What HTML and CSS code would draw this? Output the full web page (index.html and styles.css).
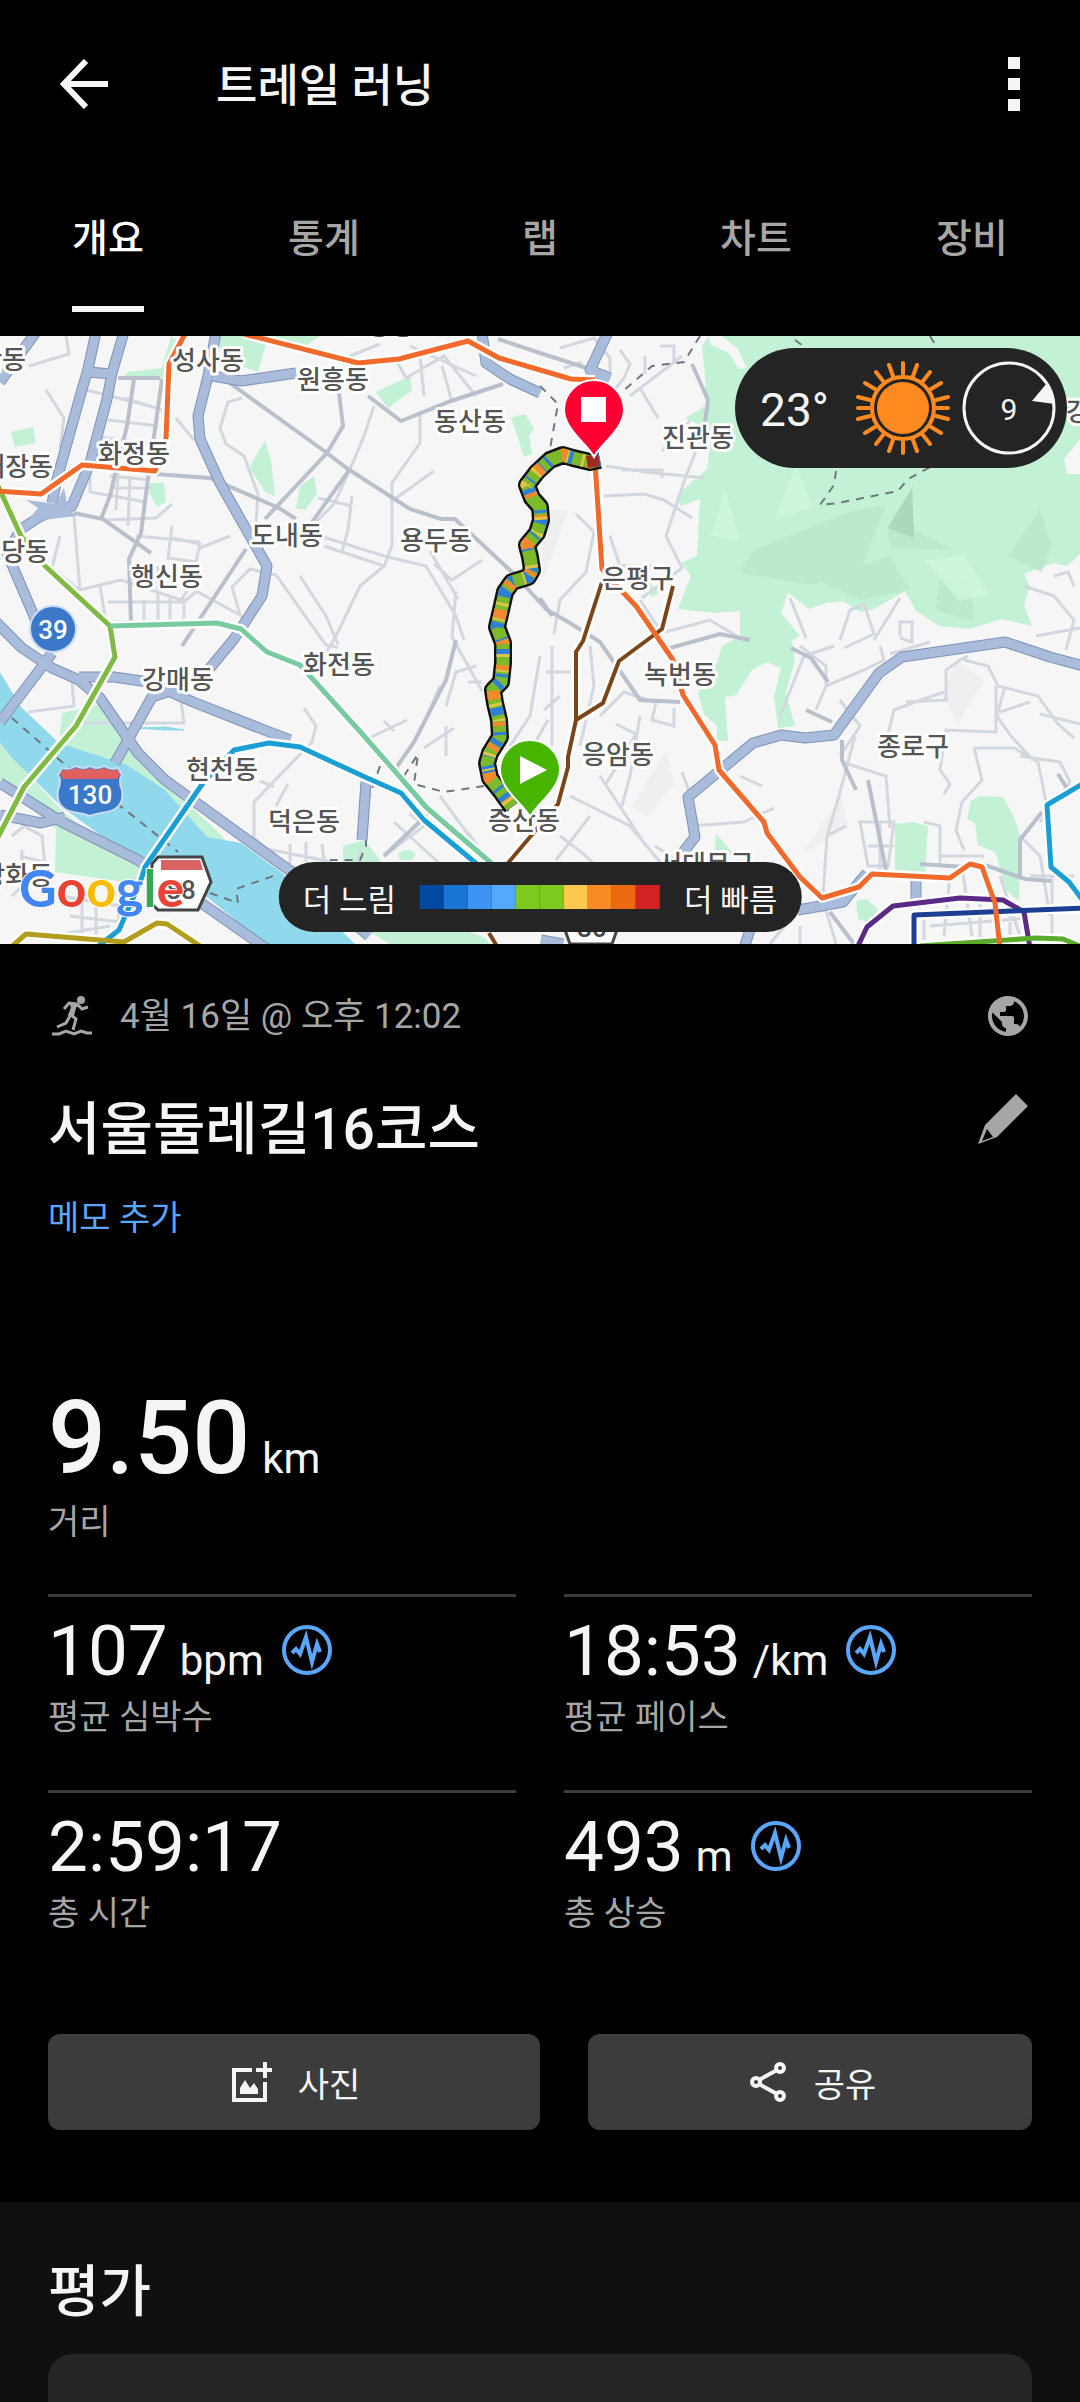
FILE: index.html
```html
<!DOCTYPE html>
<html lang="ko">
<head>
  <meta charset="UTF-8">
  <meta name="viewport" content="width=device-width, initial-scale=1.0">
  <title>트레일 러닝</title>
  <link rel="stylesheet" href="styles.css">
</head>
<body>

<header class="topbar">
  <button class="icon-btn" aria-label="뒤로">
    <svg width="48" height="50" viewBox="0 0 48 50"><path d="M26 2L4 25l22 23M4 25h44" fill="none" stroke="#f5f5f5" stroke-width="6"/></svg>
  </button>
  <h1>트레일 러닝</h1>
  <button class="icon-btn" aria-label="더보기">
    <svg width="12" height="54" viewBox="0 0 12 54" fill="#f5f5f5"><path d="M0 0h12v12H0zM0 21h12v12H0zM0 42h12v12H0z"/></svg>
  </button>
</header>

<nav class="tabs">
  <a href="#" class="active">개요</a>
  <a href="#">통계</a>
  <a href="#">랩</a>
  <a href="#">차트</a>
  <a href="#">장비</a>
</nav>

<section class="map">
  <svg class="map-canvas" viewBox="0 0 1080 608" preserveAspectRatio="xMidYMid slice">
    <rect width="1080" height="608" fill="#f6f6f7"/>

    <!-- parks -->
    <g fill="#c3f1d5">
      <path d="M709 0L702 10L705 40L706 70L685 82L712 95L707 133L676 160L681 170L700 163L697 220L681 227L691 240L678 273L716 277L740 275V300L722 310L718 325L698 357L704 378L717 390V405H728L725 361L736 359L752 334L767 326L781 332L774 361L778 392L795 390L786 357L795 324L792 304L800 300L781 277L788 257L809 273L826 267L843 265L860 276L874 273L905 255L916 275L939 290L970 293L1001 283L1032 290L1024 270L1030 250L1024 238L1053 227L1067 230L1080 218V138H1067L1064 123L1080 103V0z"/>
      <path d="M128 36l34-4 9-32 14 10-14 26-10 7-38-2zM220 0h100l-14 10-40-2-8 28-30-10-12-18z"/>
      <path d="M11 96l22-5 3 16-21 4zM150 147h14l2 19-9 5-8-14zM250 130l15-26 6 20 4 36-10-4-14-22zM296 172l4-22 14-10 3 18-12 16zM376 56l34-16 2 14-24 18zM511 82l14-4 9 15-5 6 3 19-8 3-7-22z"/>
      <path d="M895 488l18-2 15 4-3 48-30-4zM971 465l8-5 24 1 10 18 7 20-1 66-14-12-9-36-18-8-3-22-8-4zM716 498l18 20-20 6zM856 565l10-2 12 10-8 14-12-4zM744 530l34 10 22 30-30 10zM648 245l12 12-9 4zM343 510l22-6 22 30-44-4z"/>
      <path d="M59 407l3-30 38-9 40 56 26 24 50 46 30 32 38 30-2 8-44-30-80-74-30-24z"/>
      <path d="M0 407l20 22 42 46 40 32 50 30-14 12-60-38-24-20-54-42zM56 492l30 12 56 28-2 16-30-4-55-8zM370 596h100l30 12H390z"/>
      <path d="M398 518q8-8 18 0l-4 6h-12z"/>
    </g>
    <g fill="#b7e6ca" opacity=".7">
      <path d="M752 215l100-40 34-6-24 62-50 18-72-12zM887 192l26-42v44l40 20-62-2zM1008 220l32-46 12 36-10 26zM940 240l30 6 4 40-38-12zM820 245l70-25 20 34-50 10z"/>
    </g>
    <path d="M711 200l14-46 15 50zM776 182l20-54 16 44zM925 225l40-6 24 40-30 6z" fill="#d0f7df" opacity=".8"/>
    <path d="M888 192l24-40 2 50z" fill="#a9d8bd"/>
    <path d="M709 0h12l16 12 10 20-8 1-10-16-18-8z" fill="#f6f6f7"/>
    <path d="M540 174h28l-24 68zM632 470l34-56 8 34-26 32zM802 518l40-60 6 34zM942 360l14-36 28 20-26 44z" fill="#efeff0"/>

    <!-- river -->
    <path d="M0 336l21 35 38 36 68 22 38 25 42 47 34 6 41 30 73 71h-90l-58-47-59-37-41-20-45-33-48-47-14-17z" fill="#90d9ec"/>
    <path d="M138 392l28-1 18 3-20 0z" fill="#90d9ec" stroke="#90d9ec"/>

    <!-- small roads -->
    <g fill="none" stroke="#d2d7e0" stroke-width="3">
      <path d="M66 0l3 18-40 12M46 54l18 28-4 30M83 53l70 18M124 62l38 12M108 84l50 6M92 100l70 10M90 118v38l56 10M110 140l40 4M112 152h40M118 134l-2 40M130 140l-2 50M74 180l6 75M60 200l-8 32 27 22 42-10 60 20 20-30M104 184l52-2 16-14M136 200l64 6M100 250l6 36h100M108 266h76l14-12M144 264v24M158 230v56M170 262v24M184 262v26M172 190l-4 32 28 4 4-18-28-6M200 212l30-12M196 255l44 24-8-28 18-18 26 6 50 70 12 2M176 82l18 22M242 62l-14 4-8 26 6 16 18 12 14 38-2 30"/>
      <path d="M374 70l-10 30-16 38-14 30-26 26M420 75v32l-28 40v62l-8 22M392 165l42-30M352 160l-4 34-6 22M318 162l34 8M320 200l64 20 42 10 30 50 8 24M384 230l-24 20-24 50-12 20M324 210l60 20M456 255l-4 46 30 54M434 228l18 16 30-20M430 215l28 48M350 20l30-12M396 24l10 18 38-22 32 40M410 10l66 30M424 60l-4-40M452 66l-10-36M300 240l26 40 12 28M476 330l-20 6-10 34M468 346h14M440 350l-22 50M365 404l42-20M384 385l10 10M424 412l30-20M446 390v30"/>
      <path d="M28 376l46-6-2-24M80 387h104l-5-36M304 372l12 18-4 16-58 60v48l30 16 50 6 24-8 2-14M276 470l12-22M260 445l14 6M262 512l70 14M290 508v20M306 506v20M322 508l2 16M252 500l20 18 8 16M12 500l12-10 18 10 4 40M12 560l10-10v-36M20 520l24 6M60 560l60 10-4 38M70 580l50 6M50 600l60-10M82 560v48M96 562v46M384 520l40-30M394 486l44 40M410 478l44 34M420 470l36 24M468 496l22 34M440 460l44 60"/>
      <path d="M560 12l34-10 16 20v14M564 32l18-6M630 60l52-40M620 14l10 14-6 14-24 30M640 52l18 30M645 20v18M660 10h14v18M606 130l40 6 58 6M622 134h40v8M604 160l40-2 20 6 28 18M706 90l-20 50-20 60 16 32-40 30M690 85l-28 30M576 178l18 18-8 40-26 28-6 34M552 310v100M546 336h28M560 360l-16 14M610 200l10 30M640 264l20 30M650 300l60-16 30 18M540 320l-10 60-20 30M548 384l-16 28M590 310l4 40-14 60M600 380l24-24 30 10M656 366l-4 18 22 6v-18M616 388l20 10-30 50M640 380l-10 60-8 30M570 460l60 30 50 60M600 440l46 70M560 500l26 20 20 20M590 480l-34 44M682 436l8 22M740 440l22 10M690 490l54-4 30-14M655 510l30 20"/>
      <path d="M800 20v30M790 262l16 40M840 304l10-30 14-6 10 30-30 14M900 300v-14h12v20l-12-4M900 262l-26 42M1024 250l30 10 20 24-8 30M1036 300l44-8M1054 240l14-4 6 14M780 380l24-60 30-10M800 310l26 20v20l-10 24M880 310l4 14-20 10-38 16M890 318l40-12M964 324l24 6 10 20 40 10 20 28 16 14M944 356l-34 12-16 6-6 24M1005 350l-8 30 14 20 22 24M1000 376l30-10M906 366l40-2v-30l14-10 8-4M996 350v46l-50-2-6 40 10 14-6 10M974 412h40l24 14 8 40M974 412l8 32-20 22-6 28 8 20M1020 420l40 6 10 20M1080 388l-40-10M840 420l20-30-20-26M855 400l-16 60-12 40-4 60M842 426l44 14 4 52M860 486h34l-6 44h-20zM868 510h26M826 500l20-10M858 540l-20 30M880 486v50M924 486l16 4v40M940 520h44M950 540l-6 60M962 530l10 70M980 560v48M1000 540l20 60M1030 540h44M1040 486l30-40M1052 540v68M1010 568v40M930 590l100-8M924 604v-30M780 580l46-6 10 34M800 590v18M770 608l24-30M1020 500l20 20 10 60"/>
    </g>

    <!-- main grey roads -->
    <g fill="none" stroke="#b9c0cc" stroke-width="4">
      <path d="M220 40l107 77 21 16 62 40 31 10h14l58 54 34 37 23 13 30 19 40 58 40 2M339 57l4 33-16 27-62 66M155 138l55 4 69 30 17 11M368 60l33 25 50-20 52-17M134 43l-7 47-11 44-6 26-9 23M162 43l-14 100-7 54-12 26 2 64M118 42h42M74 177l29 6 48 34M246 213l-64 97M350 133l-40 56M498 3l42 14 50 16M456 304l-10 40-32 62-18 26M692 28l16 36-4 30M540 262l12 18M670 312l50-14 30 6M791 312l20 10 17 24M806 374l26 12M842 404v20l14 30M868 444l18 90M985 529l40 14 26 2M1020 540v-36l22-28M1058 438l10 16M830 576l24 32M404 450l16 10M384 520l46-44M920 528l60 4"/>
    </g>
    <g fill="none" stroke="#6f7882" stroke-width="2" stroke-dasharray="8 7">
      <path d="M700 0l-16 26-32 4-30 26M540 50l18 18-10 56M836 135l-2 14-14 20 18-2 60-12 10-12 30-16M795 4l8 6M930 0l6 10M12 382l50 44 66 50 50 40M210 557l28 10-2-14 40-14M404 440l14-22-4 30 30 8 40-6M380 430l-14 40v40l-6 14h-30"/>
    </g>

    <!-- expressways -->
    <g fill="none" stroke="#7f92b8" stroke-width="11" stroke-linejoin="round">
      <path id="hw1" d="M36-4L0 46M96-4l-8 37-7 24-24 86-5 24M88 36l24 2M124-4l-12 41-5 26-17 64-18 43-31 10-20 13-14 24 24 56 14 34M216-4l-8 44-10 40 2 23 20 44 47 83-5 30-28 43-24 29M213 40l28 5 55-8M482-4l4 31 24 16 30 14"/>
      <path id="hw2" d="M-4 286l26 26 30 20 27 12 21 18 38 55 27 27 55 40 69 50 80 66M79 341h35l34 5 45 20 79 31 18 7M176 353l-24 8-37 66M0 386l38-50 14-19M0 447l62 39 76 38 69 47 60 42M0 479l41 8 24-6M366 446l-4 58"/>
      <path id="hw3" d="M1084 330l-34-9-45-15-103 15-23 16-45 62-29 3-24-3-28 8-65 54 7 40-14 18M798 574l45-8 24-29M916 540v28M750 594l-6 18M563 608l-22-4M608-4l-18 38 20 8"/>
    </g>
    <g fill="none" stroke="#a9bcdb" stroke-width="9" stroke-linejoin="round">
      <path d="M36-4L0 46M96-4l-8 37-7 24-24 86-5 24M88 36l24 2M124-4l-12 41-5 26-17 64-18 43-31 10-20 13-14 24 24 56 14 34M216-4l-8 44-10 40 2 23 20 44 47 83-5 30-28 43-24 29M213 40l28 5 55-8M482-4l4 31 24 16 30 14"/>
      <path d="M-4 286l26 26 30 20 27 12 21 18 38 55 27 27 55 40 69 50 80 66M79 341h35l34 5 45 20 79 31 18 7M176 353l-24 8-37 66M0 386l38-50 14-19M0 447l62 39 76 38 69 47 60 42M0 479l41 8 24-6M366 446l-4 58"/>
      <path d="M1084 330l-34-9-45-15-103 15-23 16-45 62-29 3-24-3-28 8-65 54 7 40-14 18M798 574l45-8 24-29M916 540v28M750 594l-6 18M563 608l-22-4M608-4l-18 38 20 8"/>
    </g>
    <path d="M26 164l30 4 8-16 4 20 8 8-34 4-20 8 16-20z" fill="#a9bcdb"/>

    <!-- subway lines -->
    <g class="casing">
      <path d="M186-4l-17 32-3 74-11 33-73-6-41 29-45-3M244-2l114 29 41-4 69-18 31 17 72 21 24 1M595 126l7 107 12 14 22 23 37 54 10 35 32 50 4 25 45 52 3 11 33 44 22 21 37-11 13-13 78 4 20-14 12 3 13 36 5 45"/>
      <path d="M-2 150l23 50 24 30 65 60 5 31-39 69-52 61-26 50M110 290l107-3 24 6 26 23 33 13 65 72 62 71 70 60M96 612l23-18 22-50 4-13 58-84 31-33 35-7 31 4 65 30 36 16 23 27 60 50M10 612l16-14 98 8 33-19 10 1 36 24M602 246l-19 59-7 11v68l-8 37v10l-10 37-28 33-22 26M489 597l9 15M673 250l-11 43-43 32-16 42-27 17"/>
      <path d="M1084 447l-37 22 4 62 18 15 15 20M857 612l10-21 26-21 67-8 43 2 21 12 6 36M914 612v-33l170-7M920 610l116-8 27 1 19 8"/>
    </g>
    <g fill="none" stroke-width="5" stroke-linejoin="round">
      <path stroke="#7fbb42" d="M-2 150l23 50 24 30 65 60 5 31-39 69-52 61-26 50"/>
      <path stroke="#78ca9f" d="M110 290l107-3 24 6 26 23 33 13 65 72 62 71 70 60"/>
      <path stroke="#1a9fd4" d="M96 612l23-18 22-50 4-13 58-84 31-33 35-7 31 4 65 30 36 16 23 27 60 50M1084 447l-37 22 4 62 18 15 15 20"/>
      <path stroke="#b39d1c" d="M10 612l16-14 98 8 33-19 10 1 36 24"/>
      <path stroke="#7b4519" stroke-width="4" d="M602 246l-19 59-7 11v68l-8 37v10l-10 37-28 33-22 26M489 597l9 15M673 250l-11 43-43 32-16 42-27 17"/>
      <path stroke="#d8c8b8" d="M622 231h44l6 14"/>
      <path stroke="#f26a2b" d="M186-4l-17 32-3 74-11 33-73-6-41 29-45-3M244-2l114 29 41-4 69-18 31 17 72 21 24 1"/>
      <path stroke="#5a2a86" d="M857 612l10-21 26-21 67-8 43 2 21 12 6 36"/>
      <path stroke="#1c3f94" d="M914 612v-33l170-7"/>
      <path stroke="#5aaa2c" d="M920 610l116-8 27 1 19 8"/>
      <path stroke="#f26a2b" d="M595 126l7 107 12 14 22 23 37 54 10 35 32 50 4 25 45 52 3 11 33 44 22 21 37-11 13-13 78 4 20-14 12 3 13 36 5 45"/>
    </g>

    <!-- place names -->
    <g class="place">
      <text x="26" y="33" text-anchor="end" class="edge">일산동</text>
      <text x="208" y="34">성사동</text>
      <text x="333" y="53">원흥동</text>
      <text x="379" y="-1">고양동</text>
      <text x="470" y="95">동산동</text>
      <text x="134" y="127">화정동</text>
      <text x="53" y="140" class="edge">대장동</text>
      <text x="287" y="209">도내동</text>
      <text x="436" y="214">용두동</text>
      <text x="49" y="225" class="edge">토당동</text>
      <text x="167" y="250">행신동</text>
      <text x="698" y="111">진관동</text>
      <text x="638" y="252">은평구</text>
      <text x="1102" y="85">강북구</text>
      <text x="680" y="348">녹번동</text>
      <text x="618" y="428">응암동</text>
      <text x="913" y="420">종로구</text>
      <text x="706" y="538">서대문구</text>
      <text x="339" y="338">화전동</text>
      <text x="178" y="353">강매동</text>
      <text x="222" y="443">현천동</text>
      <text x="304" y="495">덕은동</text>
      <text x="524" y="494">증산동</text>
      <text x="53" y="549" class="edge">방화동</text>
    </g>

    <!-- road shields -->
    <circle cx="53" cy="293" r="23" fill="#3b78c9" stroke="#c8dcf5" stroke-width="2"/>
    <text class="shield" x="53" y="303" fill="#fff">39</text>
    <path d="M62 432q8 2 14-2 8 4 14 0 6 4 14 0 6 4 14 2l4 7q-4 5 0 15 3 18-15 22-12 2-17 4-5-2-17-4-18-4-15-22 4-10 0-15z" fill="#3b78c9" stroke="#c8dcf5" stroke-width="2"/>
    <path d="M62 434q8 1 14-2 8 3 14 0 6 3 14 0 6 3 14 2l2 4-3 5H63l-3-5z" fill="#e0605f"/>
    <text class="shield" x="90" y="468" fill="#fff">130</text>
    <path d="M158 521h44l9 25-13 28h-40l-6-6v-40z" fill="#fff" stroke="#444" stroke-width="3"/>
    <path d="M161 524h39l3 10h-42z" fill="#d96464"/>
    <text class="shield" x="181" y="563" fill="#555">88</text>
    <path d="M560 580l10 28h42l10-28z" fill="#fff" stroke="#444" stroke-width="3"/>
    <text class="shield" x="592" y="601" fill="#444">30</text>

    <!-- recorded track -->
    <g class="track">
      <path id="track" class="track-edge" d="M600 124l-10 2-17-4-10-3-13 5-13 12-10 13 5 13 8 9 1 13-4 13-10 12 3 12 2 13-4 7-16 5-7 10-4 18-4 17 6 16v20l-2 19-8 8 2 13 4 17 1 17-10 16-3 10 3 15 12 15 10 14"/>
      <path class="track-green" d="M600 124l-10 2-17-4-10-3-13 5-13 12-10 13 5 13 8 9 1 13-4 13-10 12 3 12 2 13-4 7-16 5-7 10-4 18-4 17 6 16v20l-2 19-8 8 2 13 4 17 1 17-10 16-3 10 3 15 12 15 10 14"/>
      <path class="track-blue" d="M600 124l-10 2-17-4-10-3-13 5-13 12-10 13 5 13 8 9 1 13-4 13-10 12 3 12 2 13-4 7-16 5-7 10-4 18-4 17 6 16v20l-2 19-8 8 2 13 4 17 1 17-10 16-3 10 3 15 12 15 10 14"/>
      <path class="track-orange" d="M600 124l-10 2-17-4-10-3-13 5-13 12-10 13 5 13 8 9 1 13-4 13-10 12 3 12 2 13-4 7-16 5-7 10-4 18-4 17 6 16v20l-2 19-8 8 2 13 4 17 1 17-10 16-3 10 3 15 12 15 10 14"/>
      <path class="track-yellow" d="M600 124l-10 2-17-4-10-3-13 5-13 12-10 13 5 13 8 9 1 13-4 13-10 12 3 12 2 13-4 7-16 5-7 10-4 18-4 17 6 16v20l-2 19-8 8 2 13 4 17 1 17-10 16-3 10 3 15 12 15 10 14"/>
      <path d="M599 124l-12 2" stroke="#9c2a22" stroke-width="12"/>
    </g>

    <!-- finish and start pins -->
    <path d="M594 121c-6-12-30-28-30-47a30 30 0 0 1 60 0c0 19-24 35-30 47z" fill="#fe0032" stroke="#fff" stroke-width="2"/>
    <path d="M581 61h25v25h-25z" fill="#fff"/>
    <path d="M530 481c-6-12-30-28-30-47a30 30 0 0 1 60 0c0 19-24 35-30 47z" fill="#47b400" stroke="#fff" stroke-width="2"/>
    <path d="M520 420v28l27-14z" fill="#fff"/>

    <text class="google" x="19" y="571"><tspan fill="#4285f4">G</tspan><tspan fill="#ea4335">o</tspan><tspan fill="#fbbc05">o</tspan><tspan fill="#4285f4">g</tspan><tspan fill="#34a853">l</tspan><tspan fill="#ea4335">e</tspan></text>
  </svg>

  <div class="weather">
    <span class="temp">23°</span>
    <svg width="94" height="94" viewBox="-47 -47 94 94">
      <g stroke="#ff8a1f" stroke-width="4" stroke-linecap="round">
        <path d="M0-34v-11M0 34v11M34 0h11M-34 0h-11M10-32l4-11M-10-32l-4-11M10 32l4 11M-10 32l-4 11M20-27l7-9M-20-27l-7-9M20 27l7 9M-20 27l-7 9M28-19l10-6M-28-19l-10-6M28 19l10 6M-28 19l-10 6M33-8l12-3M-33-8l-12-3M33 8l12 3M-33 8l-12 3"/>
      </g>
      <circle r="31" fill="#242424" stroke="#ff8a1f" stroke-width="4"/>
      <circle r="26" fill="#ff8a1f"/>
    </svg>
    <svg width="94" height="94" viewBox="-47 -47 94 94">
      <circle r="45" fill="none" stroke="#f5f5f5" stroke-width="3"/>
      <path d="M23-7l15-18 8 21z" fill="#f5f5f5"/>
      <text class="wind" y="12">9</text>
    </svg>
  </div>

  <div class="legend">
    <span>더 느림</span>
    <div class="scale">
      <i class="s1"></i><i class="s2"></i><i class="s3"></i><i class="s4"></i><i class="s5"></i><i class="s5"></i><i class="s6"></i><i class="s7"></i><i class="s8"></i><i class="s9"></i>
    </div>
    <span>더 빠름</span>
  </div>
</section>

<main class="summary">
  <div class="meta">
    <svg width="40" height="40" viewBox="0 0 40 40">
      <circle cx="29" cy="4" r="4" fill="#a6a6a6"/>
      <path d="M12 13l5-6 8 1 5 5 6-2M24 9l-6 9 6 5-3 11M18 20l-4 7-9 4" fill="none" stroke="#a6a6a6" stroke-width="3"/>
      <path d="M17 7l8 1-3 12h-6l3-9z" fill="#a6a6a6"/>
      <path d="M0 38l7 0 7-3 8 3 7-3 6 2h5" fill="none" stroke="#a6a6a6" stroke-width="3"/>
    </svg>
    <span class="date">4월 16일 @ 오후 12:02</span>
    <svg width="40" height="40" viewBox="2 2 20 20" fill="#a6a6a6"><path d="M12 2C6.480 2 2 6.480 2 12s4.480 10 10 10 10-4.480 10-10S17.520 2 12 2zm-1 17.930c-3.950-.490-7-3.850-7-7.930 0-.620.080-1.210.210-1.790L9 15v1c0 1.100.900 2 2 2v1.930zm6.900-2.540c-.260-.810-1-1.390-1.900-1.390h-1v-3c0-.550-.450-1-1-1H8v-2h2c.550 0 1-.450 1-1V7h2c1.100 0 2-.900 2-2v-.410c2.930 1.190 5 4.060 5 7.410 0 2.080-.800 3.970-2.100 5.390z"/></svg>
  </div>

  <div class="title-row">
    <h2>서울둘레길16코스</h2>
    <button class="icon-btn" aria-label="이름 편집">
      <svg width="50" height="50" viewBox="0 0 50 50"><path d="M38 0l12 12-31 31L0 50l7-19zM9 35l-5 12 11-4z" fill="#a6a6a6" fill-rule="evenodd"/></svg>
    </button>
  </div>
  <a href="#" class="memo">메모 추가</a>

  <div class="hero">
    <div class="value"><b>9.50</b> <span>km</span></div>
    <div class="label">거리</div>
  </div>

  <div class="stats">
    <div class="stat">
      <div class="value">107 <span>bpm</span>
        <svg class="pulse" viewBox="0 0 50 50"><circle cx="25" cy="25" r="23"/><path d="M10 28l4-4 4 5 6-17 6 25 5-18 3 8"/></svg>
      </div>
      <div class="label">평균 심박수</div>
    </div>
    <div class="stat">
      <div class="value">18:53 <span>/km</span>
        <svg class="pulse" viewBox="0 0 50 50"><circle cx="25" cy="25" r="23"/><path d="M10 28l4-4 4 5 6-17 6 25 5-18 3 8"/></svg>
      </div>
      <div class="label">평균 페이스</div>
    </div>
    <div class="stat">
      <div class="value">2:59:17</div>
      <div class="label">총 시간</div>
    </div>
    <div class="stat">
      <div class="value">493 <span>m</span>
        <svg class="pulse" viewBox="0 0 50 50"><circle cx="25" cy="25" r="23"/><path d="M10 28l4-4 4 5 6-17 6 25 5-18 3 8"/></svg>
      </div>
      <div class="label">총 상승</div>
    </div>
  </div>

  <div class="actions">
    <button class="btn">
      <svg width="40" height="40" viewBox="0 0 40 40"><path d="M20 8H2v30h31V20M33 0v16M24 8h16" fill="none" stroke="#f5f5f5" stroke-width="4"/><path d="M8 32V26l5-8 5 8 4-5 4 6v5z" fill="#f5f5f5"/></svg>
      사진
    </button>
    <button class="btn">
      <svg width="40" height="40" viewBox="0 0 40 40" fill="none" stroke="#f5f5f5" stroke-width="4"><circle cx="8" cy="20" r="4"/><circle cx="32" cy="6" r="4"/><circle cx="32" cy="34" r="4"/><path d="M11 18L29 8M11 22l18 10"/></svg>
      공유
    </button>
  </div>
</main>

<section class="rating">
  <h2>평가</h2>
  <div class="card"></div>
</section>

</body>
</html>
```
FILE: styles.css
```css
* {
    box-sizing: border-box;
}

body {
    margin: 0;
    background-color: #000;
    color: #f5f5f5;
    font-family: Roboto, "Noto Sans CJK KR", sans-serif;
    font-size: 34px;
    min-height: 100vh;
    display: flex;
    flex-direction: column;
}

h1, h2 {
    margin: 0;
    font-weight: 500;
}

a {
    text-decoration: none;
}

svg {
    display: block;
    flex-shrink: 0;
}

.icon-btn {
    padding: 0;
    border: none;
    background: none;
    cursor: pointer;
}

.topbar {
    display: flex;
    align-items: center;
    height: 168px;
    padding: 0 60px;
}

.topbar h1 {
    flex: 1;
    padding-top: 6px;
    padding-left: 108px;
    font-size: 45px;
    line-height: 60px;
}

.tabs {
    display: grid;
    grid-template-columns: repeat(5, 1fr);
    justify-items: center;
    height: 168px;
    padding-bottom: 24px;
}

.tabs a {
    padding-top: 4px;
    color: #a6a6a6;
    font-size: 39px;
    font-weight: 500;
    line-height: 134px;
    border-bottom: 6px solid transparent;
}

.tabs a.active {
    color: #fff;
    border-color: #f5f5f5;
}

/* map */
.map {
    position: relative;
    overflow: hidden;
}

.map-canvas {
    width: 100%;
    aspect-ratio: 1080 / 608;
}

.casing {
    fill: none;
    stroke: #fff;
    stroke-width: 10;
    stroke-linejoin: round;
}

.place {
    font-size: 26px;
    font-weight: 500;
    fill: #555;
    stroke: #fff;
    stroke-width: 6;
    stroke-linejoin: round;
    paint-order: stroke;
    text-anchor: middle;
}

.place .edge {
    text-anchor: end;
}

.shield {
    font-size: 26px;
    font-weight: 500;
    text-anchor: middle;
}

.google {
    font-family: Lato, sans-serif;
    font-size: 52px;
    font-weight: 700;
    stroke: #fff;
    stroke-width: 2;
    paint-order: stroke;
}

.track path {
    fill: none;
    stroke-linejoin: round;
}

.track .track-edge {
    stroke: #111;
    stroke-width: 18;
}

.track .track-green {
    stroke: #7cba2c;
    stroke-width: 13;
}

.track .track-blue {
    stroke: #2f7fd6;
    stroke-width: 13;
    stroke-dasharray: 5 12 2 9 8 17 3 6;
}

.track .track-orange {
    stroke: #f08a2c;
    stroke-width: 13;
    stroke-dasharray: 0 9 4 21 5 24 9 14;
}

.track .track-yellow {
    stroke: #dcc648;
    stroke-width: 13;
    stroke-dasharray: 0 16 3 13 2 19;
}

.weather {
    position: absolute;
    top: 12px;
    right: 13px;
    display: flex;
    align-items: center;
    height: 120px;
    padding: 0 11px 0 25px;
    border-radius: 60px;
    background-color: #242424;
}

.weather .temp {
    padding-top: 4px;
    margin-right: 27px;
    font-size: 46px;
}

.weather svg + svg {
    margin-left: 12px;
}

.wind {
    font-size: 30px;
    fill: #f5f5f5;
    text-anchor: middle;
}

.legend {
    position: absolute;
    bottom: 12px;
    left: 50%;
    transform: translateX(-50%);
    display: flex;
    align-items: center;
    gap: 24px;
    height: 70px;
    padding: 0 24px;
    border-radius: 35px;
    background-color: #242424;
    font-size: 31px;
    white-space: nowrap;
}

.scale {
    display: flex;
}

.scale i {
    width: 24px;
    height: 24px;
}

.s1 { background-color: #0049a0; }
.s2 { background-color: #1a74d4; }
.s3 { background-color: #3d94f5; }
.s4 { background-color: #54a9ff; }
.s5 { background-color: #7ec91f; }
.s6 { background-color: #fcc850; }
.s7 { background-color: #f98b27; }
.s8 { background-color: #ea6a10; }
.s9 { background-color: #d32222; }

/* summary */
.summary {
    padding: 48px 48px 72px;
}

.meta {
    display: flex;
    align-items: center;
    height: 48px;
    padding: 0 4px;
    color: #a6a6a6;
}

.meta .date {
    flex: 1;
    padding-top: 2px;
    padding-left: 28px;
    font-size: 35px;
    line-height: 48px;
}

.title-row {
    display: flex;
    justify-content: space-between;
    align-items: flex-start;
    margin-top: 54px;
    padding-right: 4px;
}

.title-row h2 {
    font-size: 57px;
    line-height: 72px;
}

.memo {
    display: block;
    margin-top: 28px;
    color: #5aa6fa;
    line-height: 48px;
}

.hero {
    margin-top: 136px;
}

.value {
    display: flex;
    align-items: baseline;
    height: 84px;
    font-size: 71px;
    line-height: 84px;
}

.value span {
    margin-left: 12px;
    font-size: 42px;
}

.hero .value {
    height: 120px;
    line-height: 120px;
}

.hero b {
    font-size: 102px;
    font-weight: 500;
}

.label {
    color: #a6a6a6;
    line-height: 48px;
}

.stats {
    display: grid;
    grid-template-columns: 1fr 1fr;
    column-gap: 48px;
    margin-top: 48px;
}

.stat {
    height: 196px;
    padding-top: 12px;
    border-top: 3px solid #3c3c3c;
}

.pulse {
    width: 50px;
    height: 50px;
    margin-left: 18px;
    fill: none;
    stroke: #5aa6fa;
    stroke-width: 4;
}

.actions {
    display: grid;
    grid-template-columns: 492fr 444fr;
    gap: 48px;
    margin-top: 48px;
}

.btn {
    display: flex;
    align-items: center;
    justify-content: center;
    gap: 26px;
    height: 96px;
    padding: 0 0 0 4px;
    border: none;
    border-radius: 12px;
    background-color: #3c3c3c;
    color: #f5f5f5;
    font-family: inherit;
    font-size: 34px;
    cursor: pointer;
}

.rating {
    flex: 1;
    display: flex;
    flex-direction: column;
    padding: 50px 48px 0;
    background-color: #101010;
}

.rating h2 {
    font-size: 56px;
    line-height: 80px;
}

.card {
    flex: 1;
    margin-top: 22px;
    border-radius: 24px 24px 0 0;
    background-color: #252525;
}
```
